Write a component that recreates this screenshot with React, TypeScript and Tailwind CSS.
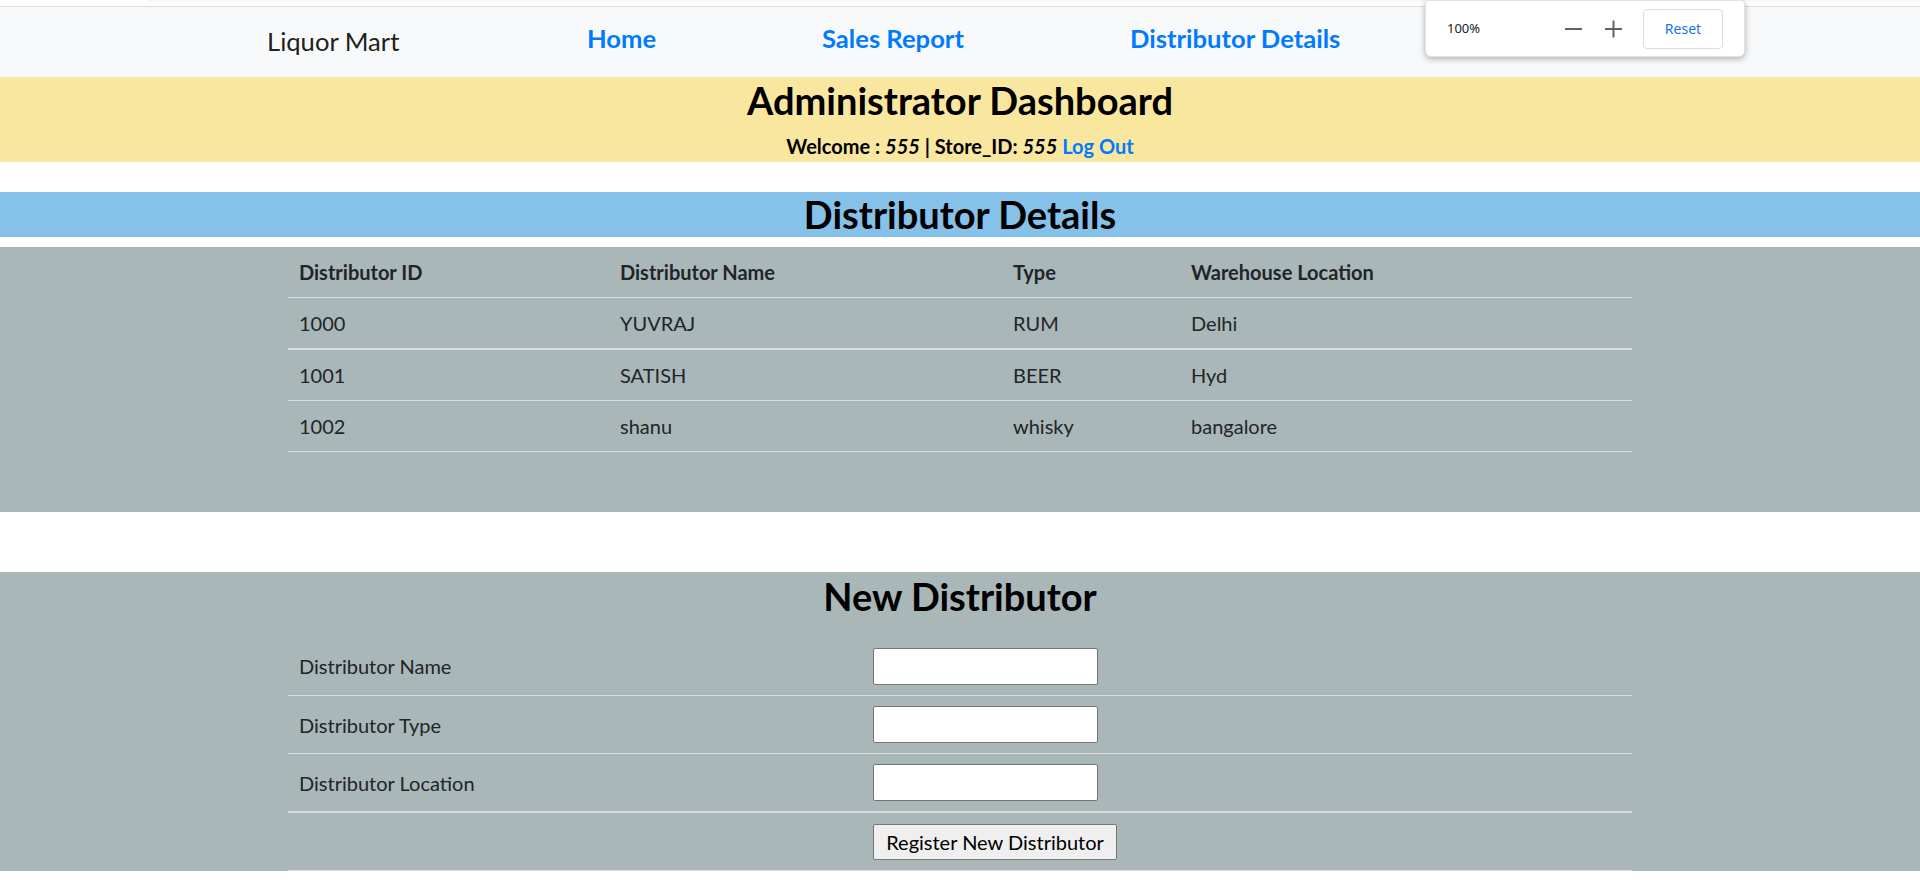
import React from 'react';

const distributors = [
  { id: '1000', name: 'YUVRAJ', type: 'RUM', location: 'Delhi' },
  { id: '1001', name: 'SATISH', type: 'BEER', location: 'Hyd' },
  { id: '1002', name: 'shanu', type: 'whisky', location: 'bangalore' },
];

const ZoomPopup: React.FC = () => (
  <div className="absolute left-[1425px] top-0 w-[320px] h-[57px] bg-white rounded-b-[6px] rounded-t-[4px] shadow-[0_2px_6px_rgba(0,0,0,0.3)] border border-[#e3e3e3] flex items-center font-['Noto_Sans',sans-serif]">
    <span className="ml-[21px] w-[118px] text-[13px] text-[#202124]">100%</span>
    <svg width="17" height="18" viewBox="0 0 17 18">
      <rect x="0" y="8" width="17" height="2" fill="#5f6368" />
    </svg>
    <svg className="ml-[23px]" width="17" height="18" viewBox="0 0 17 18">
      <rect x="0" y="8" width="17" height="2" fill="#5f6368" />
      <rect x="7.5" y="0.5" width="2" height="17" fill="#5f6368" />
    </svg>
    <button className="ml-[21px] w-[80px] h-[40px] rounded-[4px] border border-[#dadce0] bg-white text-[14px] text-[#1a73e8]">
      Reset
    </button>
  </div>
);

export default function App() {
  return (
    <div className="relative w-[1920px] h-[885px] overflow-hidden bg-white font-['Lato','Noto_Sans',sans-serif] text-[#212529]">
      <div className="h-[6px] bg-white">
        <div className="ml-[148px] h-[1px] bg-[#f3f4f5]" />
      </div>

      <nav className="h-[71px] border-t border-[#dcdfe2] bg-[#f8f9fa] flex items-center pb-[8px]">
        <span className="ml-[267px] w-[320px] text-[25.6px] leading-[30px] text-[#1d1f21] mt-[6px]">Liquor Mart</span>
        <a className="w-[235px] text-[25.6px] leading-[30px] font-bold text-[#007bff]">Home</a>
        <a className="w-[308px] text-[25.6px] leading-[30px] font-bold text-[#007bff]">Sales Report</a>
        <a className="text-[25.6px] leading-[30px] font-bold text-[#007bff]">Distributor Details</a>
      </nav>

      <header className="h-[85px] bg-[#f9e79f] text-center text-black">
        <h1 className="text-[38px] leading-[46px] font-bold">Administrator Dashboard</h1>
        <p className="mt-[11px] text-[20px] leading-[24px] font-bold">
          Welcome : <i>555</i> | Store_ID: <i>555</i> <a className="text-[#007bff]">Log Out</a>
        </p>
      </header>

      <div className="h-[30px]" />

      <h2 className="h-[45px] bg-[#85c1e9] text-center text-black text-[38px] leading-[45px] font-bold">
        Distributor Details
      </h2>

      <div className="h-[10px]" />

      <section className="h-[265px] bg-[#aab7b8]">
        <div className="w-[1344px] mx-auto text-[20px] leading-[30px]">
          <div className="grid grid-cols-[320px_393px_178px_453px] h-[51px] items-center border-b border-[#dadde0] font-bold">
            <div className="pl-[11px]">Distributor ID</div>
            <div className="pl-[12px]">Distributor Name</div>
            <div className="pl-[12px]">Type</div>
            <div className="pl-[12px]">Warehouse Location</div>
          </div>
          {distributors.map((d, i) => (
            <div
              key={d.id}
              className={`grid grid-cols-[320px_393px_178px_453px] items-center border-[#dadde0] ${i === 0 ? 'h-[52px] border-b-2' : 'h-[51px] border-b'}`}
            >
              <div className="pl-[11px]">{d.id}</div>
              <div className="pl-[12px]">{d.name}</div>
              <div className="pl-[12px]">{d.type}</div>
              <div className="pl-[12px]">{d.location}</div>
            </div>
          ))}
        </div>
      </section>

      <div className="h-[60px]" />

      <section className="h-[299px] bg-[#aab7b8]">
        <h2 className="h-[48px] text-center text-black text-[38px] leading-[48px] font-bold">New Distributor</h2>
        <div className="w-[1344px] mx-auto mt-[17px] text-[20px] leading-[30px]">
          {['Distributor Name', 'Distributor Type', 'Distributor Location'].map((label, i) => (
            <div
              key={label}
              className={`grid grid-cols-[573px_771px] items-center border-[#dadde0] ${i === 2 ? 'h-[59px] border-b-2' : i === 0 ? 'h-[59px] border-b' : 'h-[58px] border-b'}`}
            >
              <div className="pl-[11px]">{label}</div>
              <div className="pl-[12px]">
                <input
                  type="text"
                  className="block w-[225px] h-[37px] bg-white border border-[#767676] rounded-[2px] px-2 outline-none"
                />
              </div>
            </div>
          ))}
          <div className="grid grid-cols-[573px_771px] items-center h-[58px] border-b border-[#dadde0]">
            <div />
            <div className="pl-[12px]">
              <button className="h-[36px] w-[244px] bg-[#efefef] border border-[#767676] rounded-[2px] text-[20px] leading-[24px] text-black">
                Register New Distributor
              </button>
            </div>
          </div>
        </div>
      </section>

      <ZoomPopup />
    </div>
  );
}
